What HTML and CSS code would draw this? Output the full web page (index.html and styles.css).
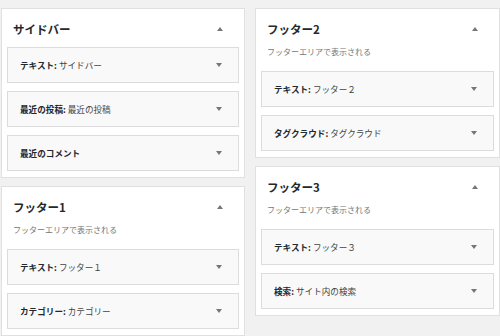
FILE: index.html
```html
<!DOCTYPE html>
<html lang="ja">
<head>
<meta charset="utf-8">
<link rel="stylesheet" href="styles.css">
</head>
<body>
<div class="page">
  <div class="column">
    <section class="area">
      <div class="area-head"><h2 class="area-title">サイドバー</h2><span class="tri-up"></span></div>
      <div class="widget"><h3 class="widget-title">テキスト: <span class="in-title">サイドバー</span></h3><span class="tri-down"></span></div>
      <div class="widget"><h3 class="widget-title">最近の投稿: <span class="in-title">最近の投稿</span></h3><span class="tri-down"></span></div>
      <div class="widget"><h3 class="widget-title">最近のコメント</h3><span class="tri-down"></span></div>
    </section>
    <section class="area">
      <div class="area-head"><h2 class="area-title">フッター1</h2><span class="tri-up"></span></div>
      <p class="area-desc">フッターエリアで表示される</p>
      <div class="widget"><h3 class="widget-title">テキスト: <span class="in-title">フッター１</span></h3><span class="tri-down"></span></div>
      <div class="widget"><h3 class="widget-title">カテゴリー: <span class="in-title">カテゴリー</span></h3><span class="tri-down"></span></div>
    </section>
  </div>
  <div class="column">
    <section class="area">
      <div class="area-head"><h2 class="area-title">フッター2</h2><span class="tri-up"></span></div>
      <p class="area-desc">フッターエリアで表示される</p>
      <div class="widget"><h3 class="widget-title">テキスト: <span class="in-title">フッター２</span></h3><span class="tri-down"></span></div>
      <div class="widget"><h3 class="widget-title">タグクラウド: <span class="in-title">タグクラウド</span></h3><span class="tri-down"></span></div>
    </section>
    <section class="area">
      <div class="area-head"><h2 class="area-title">フッター3</h2><span class="tri-up"></span></div>
      <p class="area-desc">フッターエリアで表示される</p>
      <div class="widget"><h3 class="widget-title">テキスト: <span class="in-title">フッター３</span></h3><span class="tri-down"></span></div>
      <div class="widget"><h3 class="widget-title">検索: <span class="in-title">サイト内の検索</span></h3><span class="tri-down"></span></div>
    </section>
  </div>
</div>
</body>
</html>
```

FILE: styles.css
```css
html, body {
  margin: 0;
  padding: 0;
  background: #f1f1f1;
  height: 336px;
  overflow: hidden;
}

body {
  font-family: "Noto Sans CJK JP", "Noto Sans", sans-serif;
  color: #23282d;
}

.page {
  display: grid;
  grid-template-columns: 244px 245px;
  column-gap: 10px;
  padding: 8px 0 0 1px;
  align-items: start;
}

.column {
  display: flex;
  flex-direction: column;
  gap: 8px;
}

.area {
  background: #ffffff;
  border: 1px solid #e0e0e0;
  padding: 0 5px 6px 5px;
}

.area-head {
  display: flex;
  align-items: center;
  justify-content: space-between;
  padding: 12px 16px 0 6px;
  height: 16px;
  margin-bottom: 10px;
}

.area-title {
  margin: 0;
  font-size: 11.5px;
  line-height: 16px;
  font-weight: 700;
  color: #23282d;
}

.area-desc {
  margin: -1px 0 13px 6px;
  font-size: 8px;
  line-height: 12px;
  color: #72777c;
}

.tri-up {
  width: 0;
  height: 0;
  border-left: 3.5px solid transparent;
  border-right: 3.5px solid transparent;
  border-bottom: 4px solid #72777c;
}

.tri-down {
  width: 0;
  height: 0;
  border-left: 3.5px solid transparent;
  border-right: 3.5px solid transparent;
  border-top: 4px solid #72777c;
}

.widget {
  display: flex;
  align-items: center;
  justify-content: space-between;
  height: 34px;
  border: 1px solid #dcdcdc;
  background: #f9f9f9;
  padding: 0 16px 0 12px;
  margin-bottom: 8px;
}

.widget:last-child {
  margin-bottom: 0;
}

.widget-title {
  margin: 0;
  font-size: 8.6px;
  line-height: 12px;
  font-weight: 700;
  color: #23282d;
  white-space: nowrap;
}

.in-title {
  font-weight: 400;
  color: #444;
}
```
